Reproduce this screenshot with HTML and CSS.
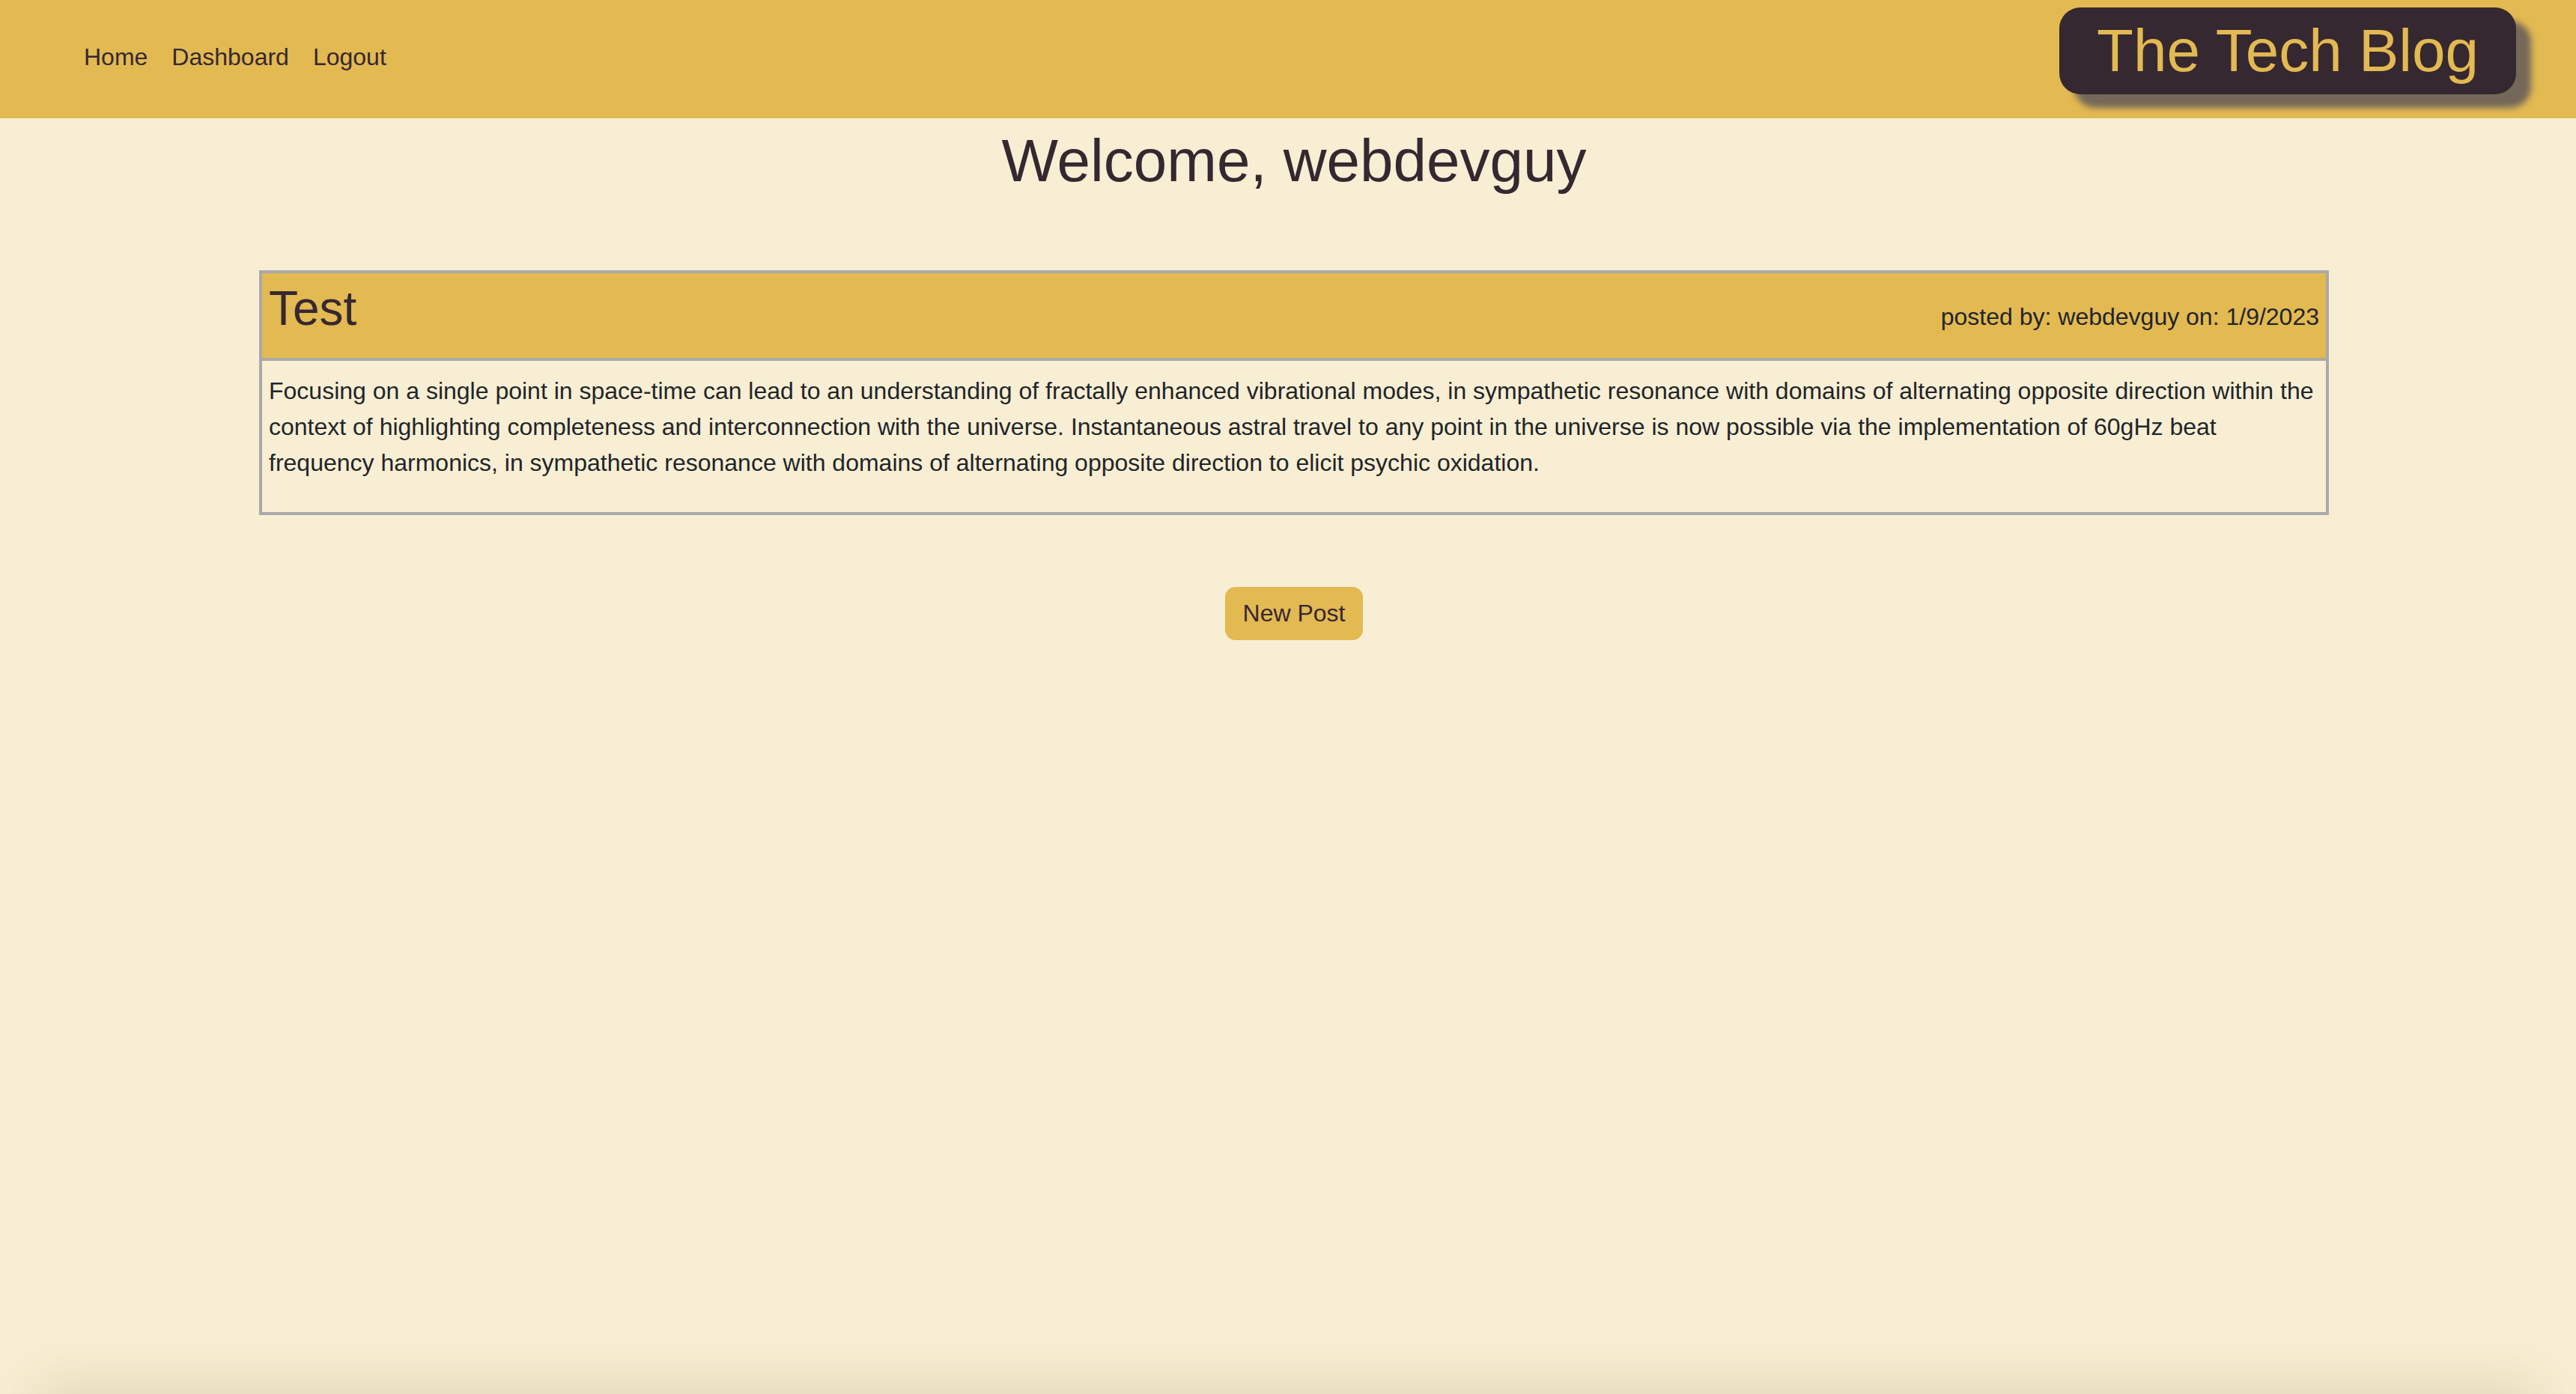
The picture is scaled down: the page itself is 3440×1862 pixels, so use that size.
FILE: index.html
```html
<!DOCTYPE html>
<html lang="en">
<head>
<meta charset="utf-8">
<title>The Tech Blog</title>
<link rel="stylesheet" href="styles.css">
</head>
<body>
<header class="site-header">
  <nav class="nav">
    <a class="nav-link" href="#">Home</a>
    <a class="nav-link" href="#">Dashboard</a>
    <a class="nav-link" href="#">Logout</a>
  </nav>
  <div class="brand">The Tech Blog</div>
</header>
<main class="main">
  <h1 class="welcome">Welcome, webdevguy</h1>
  <article class="post">
    <div class="post-head">
      <h2 class="post-title">Test</h2>
      <span class="post-meta">posted by: webdevguy on: 1/9/2023</span>
    </div>
    <div class="post-body">
      <p class="post-text">Focusing on a single point in space-time can lead to an understanding of fractally enhanced vibrational modes, in sympathetic resonance with domains of alternating opposite direction within the context of highlighting completeness and interconnection with the universe. Instantaneous astral travel to any point in the universe is now possible via the implementation of 60gHz beat frequency harmonics, in sympathetic resonance with domains of alternating opposite direction to elicit psychic oxidation.</p>
    </div>
  </article>
  <div class="actions">
    <button class="btn" type="button">New Post</button>
  </div>
</main>
<footer class="footer"></footer>
</body>
</html>
```

FILE: styles.css
```css
html, body {
  margin: 0;
  padding: 0;
}

body {
  background: #f8eed3;
  font-family: "Liberation Sans", Arial, Helvetica, sans-serif;
  font-size: 32px;
  color: #212529;
  min-height: 1862px;
  overflow: hidden;
}

.site-header {
  height: 158px;
  background: #e3b952;
  display: flex;
  justify-content: space-between;
  align-items: flex-start;
  padding: 0 80px 0 112px;
  box-sizing: border-box;
}

.nav {
  display: flex;
  gap: 32px;
  margin-top: 58px;
  line-height: 37px;
}

.nav-link {
  color: #352830;
  text-decoration: none;
  font-size: 32px;
}

.brand {
  margin-top: 10px;
  background: #352830;
  color: #e3b952;
  font-size: 80px;
  line-height: 90px;
  padding: 13px 50px;
  border-radius: 28px;
  box-shadow: 20px 18px 8px #736859;
  white-space: nowrap;
}

.main {
  padding: 0 330px 0 346px;
}

.welcome {
  margin: 11px 0 0;
  text-align: center;
  font-size: 80px;
  font-weight: normal;
  line-height: 92px;
  color: #352830;
}

.post {
  margin-top: 100px;
  border: 4px solid #a9a9a9;
}

.post-head {
  background: #e3b952;
  border-bottom: 4px solid #a9a9a9;
  display: flex;
  justify-content: space-between;
  align-items: baseline;
  padding: 16px 9px 34px 9px;
}

.post-title {
  margin: 0;
  font-size: 64px;
  font-weight: normal;
  line-height: 63px;
  color: #352830;
}

.post-meta {
  font-size: 32px;
  color: #212529;
}

.post-body {
  padding: 16px 9px 42px;
}

.post-text {
  margin: 0;
  font-size: 32px;
  line-height: 48px;
  color: #212529;
}

.actions {
  margin-top: 96px;
  display: flex;
  justify-content: center;
}

.btn {
  background: #e3b952;
  color: #352830;
  border: none;
  border-radius: 14px;
  font-family: inherit;
  font-size: 32px;
  line-height: 39px;
  padding: 16px 24px;
}

.footer {
  position: fixed;
  left: 60px;
  right: 60px;
  bottom: -60px;
  height: 60px;
  box-shadow: 0 0 70px 10px rgba(120, 95, 40, 0.18);
}
```
